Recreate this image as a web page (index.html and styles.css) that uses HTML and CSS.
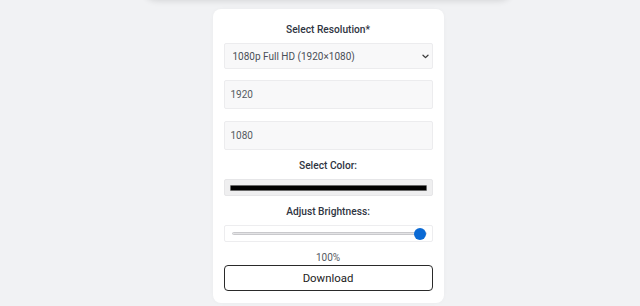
FILE: index.html
```html
<!DOCTYPE html>
<html lang="en">
<head>
<meta charset="utf-8">
<title>Wallpaper Generator</title>
<link rel="stylesheet" href="styles.css">
</head>
<body>
<div class="topbar"></div>
<main class="card">
  <label class="label label-first" for="res">Select Resolution*</label>
  <div class="select-wrap">
    <select id="res" class="field select">
      <option>1080p Full HD (1920×1080)</option>
    </select>
    <svg class="chevron" width="7" height="5" viewBox="0 0 7 5" aria-hidden="true"><path d="M1 1.2 L3.5 3.6 L6 1.2" fill="none" stroke="#3c3c3c" stroke-width="1.3" stroke-linecap="round" stroke-linejoin="round"/></svg>
  </div>
  <input class="field text" type="text" value="1920">
  <input class="field text" type="text" value="1080">
  <label class="label" for="color">Select Color:</label>
  <div class="color-box" id="color"><div class="color-swatch"></div></div>
  <label class="label" for="bright">Adjust Brightness:</label>
  <input id="bright" class="range" type="range" min="0" max="100" value="100">
  <div class="value">100%</div>
  <button class="download" type="button">Download</button>
</main>
</body>
</html>
```
FILE: styles.css
```css
html, body {
  margin: 0;
  padding: 0;
}
body {
  background: #f1f2f4;
  font-family: Roboto, "Noto Sans", sans-serif;
  color: #333a45;
  height: 306px;
  overflow: hidden;
  padding-left: 16px;
  box-sizing: border-box;
}
.topbar {
  width: 370px;
  height: 40px;
  margin: -40px auto 0;
  background: #f3f4f6;
  border-radius: 0 0 14px 14px;
  box-shadow: 0 1px 6px rgba(0, 0, 0, 0.12);
}
.card {
  width: 209px;
  margin: 9px auto 0;
  padding: 11px 11px 12px;
  background: #ffffff;
  border-radius: 8px;
  display: flex;
  flex-direction: column;
  box-shadow: 0 0 4px rgba(0, 0, 0, 0.03);
}
.label {
  display: block;
  text-align: center;
  font-size: 10.2px;
  font-weight: 500;
  line-height: 16px;
  color: #2f3542;
  margin: 8px 0 5px;
}
.label-first {
  margin-top: 2px;
  margin-bottom: 5px;
}
.select-wrap {
  position: relative;
  height: 26px;
}
.chevron {
  position: absolute;
  right: 4px;
  top: 11px;
  pointer-events: none;
}
.field {
  box-sizing: border-box;
  width: 209px;
  font-family: Roboto, "Noto Sans", sans-serif;
  font-size: 10px;
  color: #555a62;
  background: #f8f8f9;
  border: 1px solid #ececee;
  border-radius: 2px;
  outline: none;
}
.select {
  -webkit-appearance: none;
  appearance: none;
  height: 26px;
  padding: 0 4px 0 8px;
  color: #4a4f57;
}
.text {
  height: 29px;
  padding: 0 6px;
  margin-top: 11px;
}
.text + .text {
  margin-top: 12px;
}
.color-box {
  box-sizing: border-box;
  height: 17px;
  background: #efeff0;
  border: 1px solid #e6e6e8;
  border-radius: 2px;
  padding: 5px 5px 4px 5px;
}
.color-swatch {
  height: 6px;
  background: #000;
  border: 1px solid #6a6a6a;
  border-radius: 1px;
  box-sizing: border-box;
}
.range {
  -webkit-appearance: none;
  appearance: none;
  box-sizing: border-box;
  width: 209px;
  height: 17px;
  margin: 0;
  padding: 0 5px 0 7px;
  background: #fff;
  border: 1px solid #ededef;
  border-radius: 2px;
}
.range::-webkit-slider-runnable-track {
  height: 3px;
  background: #e3e3e5;
  border: 1px solid #c9c9cc;
  border-radius: 2px;
}
.range::-webkit-slider-thumb {
  -webkit-appearance: none;
  width: 12px;
  height: 12px;
  margin-top: -5.5px;
  border-radius: 50%;
  background: #0b6ad4;
  border: none;
}
.value {
  text-align: center;
  font-size: 10px;
  line-height: 14px;
  color: #555a62;
  margin: 9px 0 0;
}
.download {
  height: 26px;
  width: 209px;
  font-family: Roboto, "Noto Sans", sans-serif;
  font-size: 11.4px;
  color: #222;
  background: #fff;
  border: 1.5px solid #2a2a2a;
  border-radius: 4px;
  padding: 0;
}
```
